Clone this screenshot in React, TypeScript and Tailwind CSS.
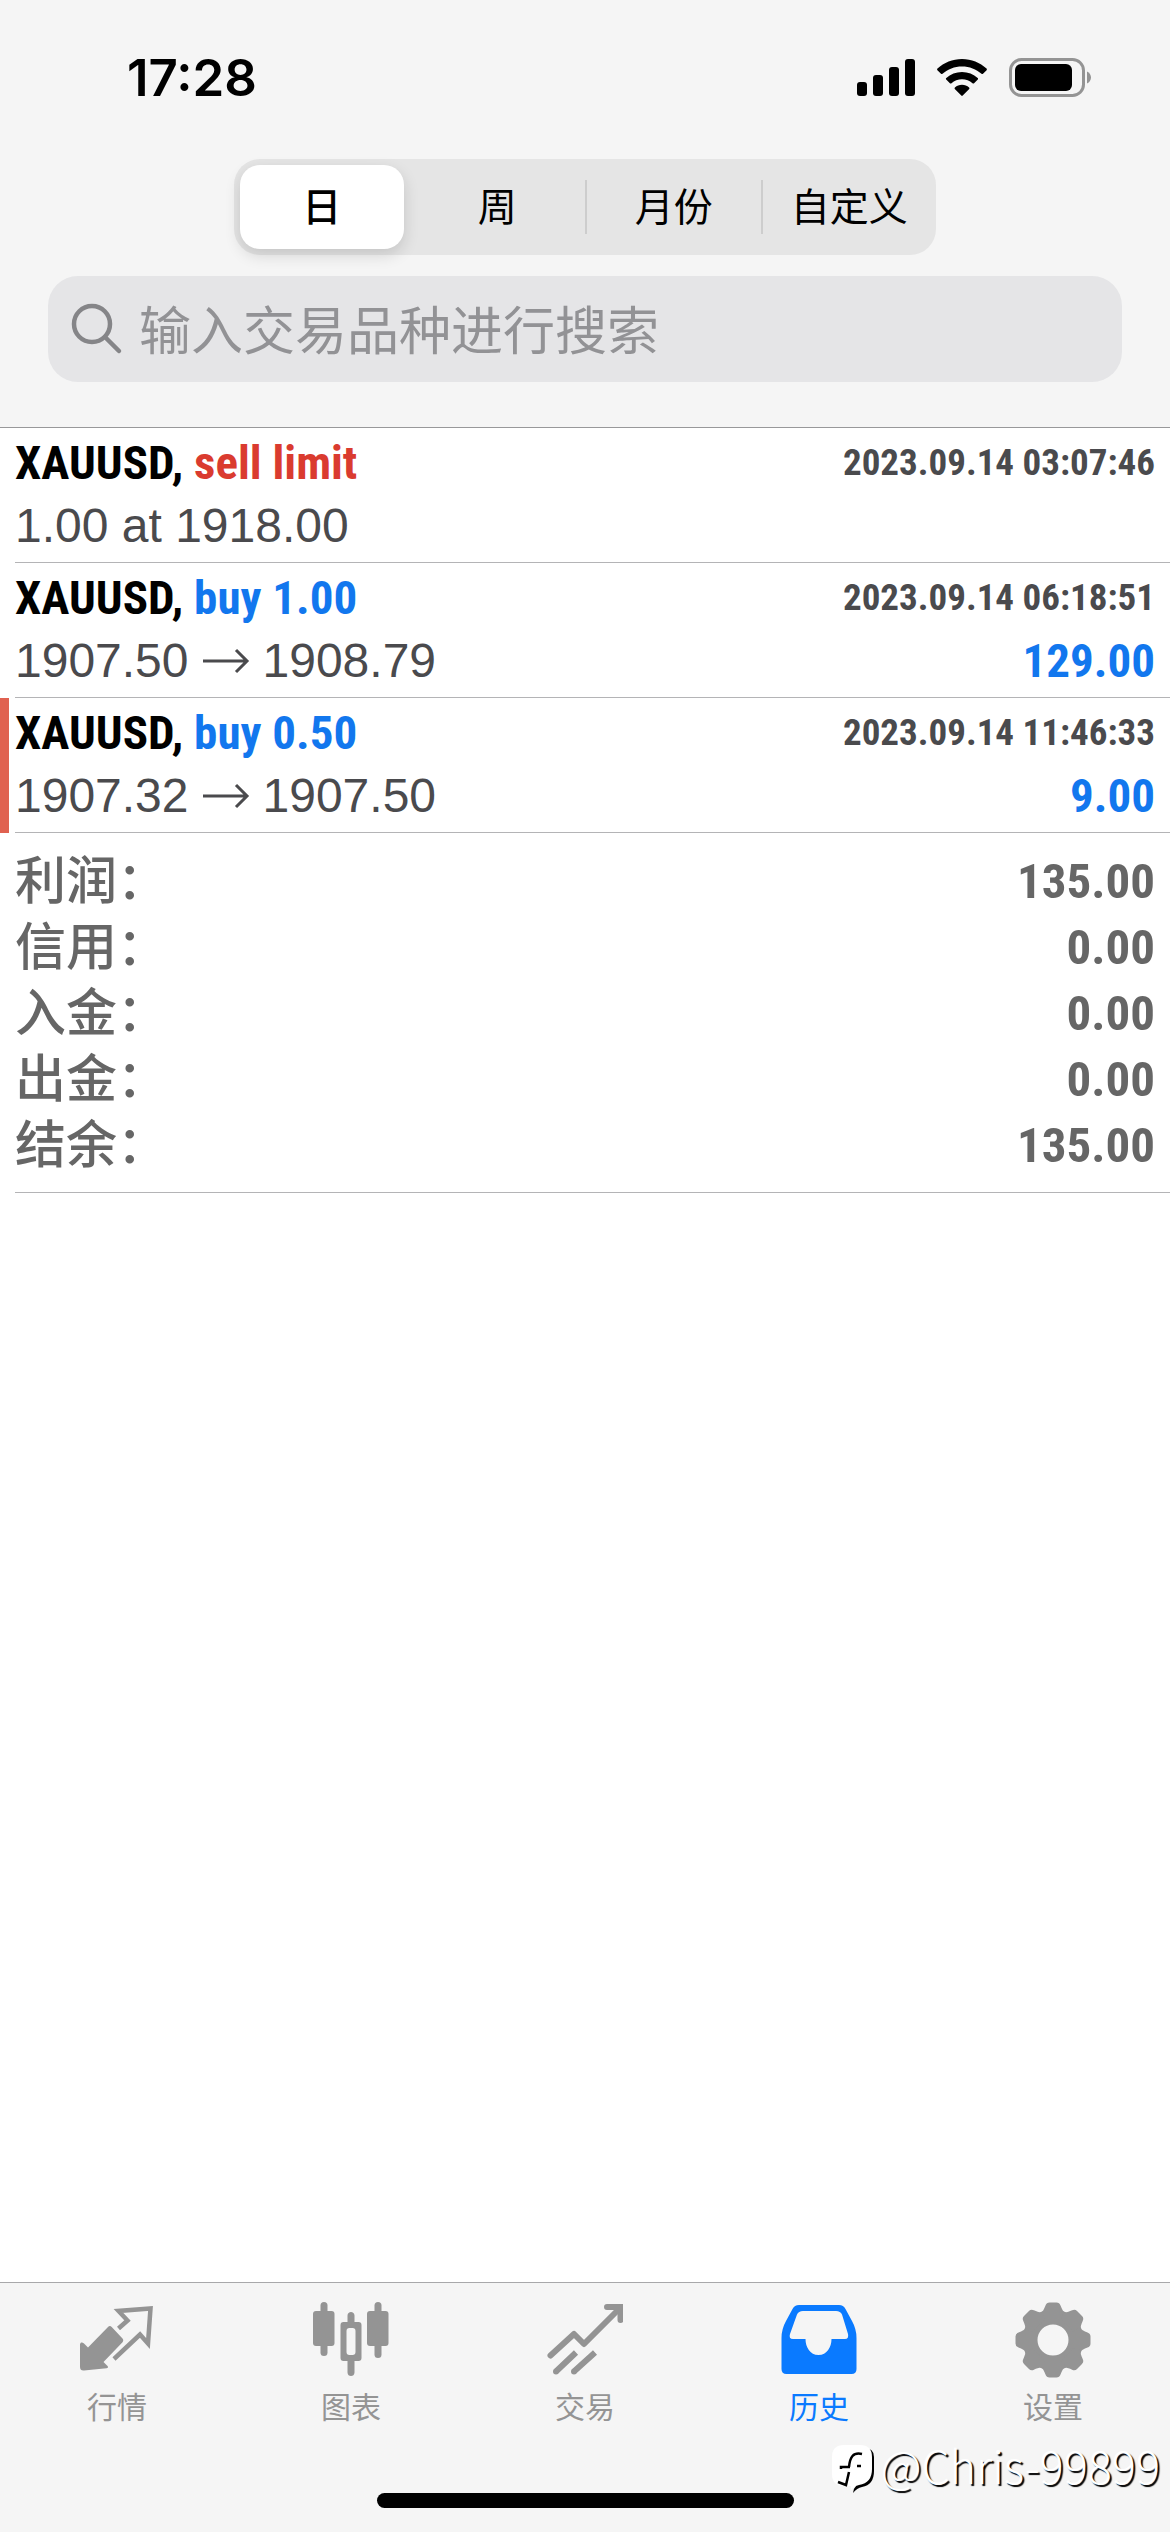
import React, { useState } from 'react';

type Trade = {
  symbol: string;
  action: string;
  side: 'buy' | 'sell';
  time: string;
  detail: string;
  closePrice?: string;
  profit?: string;
  flagged?: boolean;
};

const periods = ['日', '周', '月份', '自定义'];

const trades: Trade[] = [
  { symbol: 'XAUUSD', action: 'sell limit', side: 'sell', time: '2023.09.14 03:07:46', detail: '1.00 at 1918.00' },
  { symbol: 'XAUUSD', action: 'buy 1.00', side: 'buy', time: '2023.09.14 06:18:51', detail: '1907.50', closePrice: '1908.79', profit: '129.00' },
  { symbol: 'XAUUSD', action: 'buy 0.50', side: 'buy', time: '2023.09.14 11:46:33', detail: '1907.32', closePrice: '1907.50', profit: '9.00', flagged: true },
];

const summary = [
  { label: '利润', value: '135.00' },
  { label: '信用', value: '0.00' },
  { label: '入金', value: '0.00' },
  { label: '出金', value: '0.00' },
  { label: '结余', value: '135.00' },
];

const StatusBar = () => (
  <div className="flex items-center justify-between pt-[46px] pl-[127px] pr-[78px]">
    <span className="font-[Inter,sans-serif] text-[51px] leading-[64px] font-semibold text-black">17:28</span>
    <div className="flex items-center gap-[22px]">
      <svg width="58" height="38" viewBox="0 0 58 38" aria-hidden="true">
        <rect x="0" y="23" width="10" height="14" rx="3" />
        <rect x="16" y="16" width="10" height="21" rx="3" />
        <rect x="32" y="8" width="10" height="29" rx="3" />
        <rect x="48" y="0" width="10" height="37" rx="3" />
      </svg>
      <svg width="50" height="38" viewBox="0 0 50 38" aria-hidden="true">
        <path d="M25 0C34.500 0 43 3.600 49.500 9.600C50 10 50 10.700 49.600 11.200L46 14.800C45.600 15.200 45 15.200 44.500 14.800C39.200 10 32.500 7.400 25 7.400C17.500 7.400 10.800 10 5.500 14.800C5 15.200 4.400 15.200 4 14.800L.4 11.200C0 10.700 0 10 .5 9.600C7 3.600 15.500 0 25 0Z" />
        <path d="M25 13C31 13 36.500 15.200 40.700 19C41.200 19.400 41.200 20.100 40.800 20.600L37.100 24.300C36.700 24.700 36 24.700 35.500 24.300C32.700 21.800 29 20.300 25 20.300C21 20.300 17.300 21.800 14.500 24.300C14 24.700 13.300 24.700 12.900 24.300L9.200 20.600C8.800 20.100 8.800 19.400 9.300 19C13.500 15.200 19 13 25 13Z" />
        <path d="M25 25.800C27.700 25.800 30.200 26.800 32.100 28.500C32.600 29 32.600 29.600 32.200 30.100L25.700 36.600C25.300 37 24.700 37 24.300 36.600L17.800 30.100C17.400 29.600 17.400 29 17.900 28.500C19.800 26.800 22.300 25.800 25 25.800Z" />
      </svg>
      <svg width="83" height="40" viewBox="0 0 83 40" aria-hidden="true">
        <rect x="1.500" y="1.500" width="73" height="36" rx="11" fill="none" stroke="#949494" strokeWidth="3" />
        <rect x="6" y="6" width="57" height="27" rx="6" />
        <path d="M78 13.500C80.500 14.700 82 17 82 19.500C82 22 80.500 24.300 78 25.500Z" fill="#949494" />
      </svg>
    </div>
  </div>
);

const TradeRow: React.FC<{ trade: Trade }> = ({ trade }) => (
  <li className="flex gap-[6px]">
    <div className={`w-[9px] shrink-0 ${trade.flagged ? 'bg-[#e06150]' : ''}`} />
    <div className="grow border-b border-[#b4b4b6] pt-[3px] pr-[15px] pb-[5px]">
      <div className="flex items-center justify-between leading-[63px] font-bold font-['Roboto_Condensed',sans-serif]">
        <h2 className="text-[47px] text-black">
          {trade.symbol}, <span className={trade.side === 'sell' ? 'text-[#da3b2f]' : 'text-[#1277ee]'}>{trade.action}</span>
        </h2>
        <time className="text-[37px] text-[#4a4a4d]">{trade.time}</time>
      </div>
      <div className="flex items-center justify-between text-[48px] leading-[63px]">
        <p className="flex items-center text-[#4a4a4d]">
          {trade.detail}
          {trade.closePrice && (
            <>
              <svg className="mx-[13px]" width="48" height="26" viewBox="0 0 48 26" fill="none" stroke="currentColor" strokeWidth="3" aria-label="→">
                <path d="M1 13H45M34 2L45 13L34 24" />
              </svg>
              {trade.closePrice}
            </>
          )}
        </p>
        {trade.profit && (
          <span className="text-[47px] font-bold text-[#1277ee] font-['Roboto_Condensed',sans-serif]">{trade.profit}</span>
        )}
      </div>
    </div>
  </li>
);

const QuotesIcon = () => (
  <svg width="76" height="76" viewBox="0 0 76 76" aria-hidden="true">
    <path d="M2 40.500C3 40.200 4 40.500 5 41.500L9 45.500L29 25C30.200 23.800 31.500 23.800 32.700 25L43.500 36.500C44.500 37.700 44.500 39 43.500 40.200L24.500 60L28.500 64C29.500 65 29 66 27.500 66.200L5 68.500C2.500 68.700 1 67.500 1 65V42Z" fill="currentColor" />
    <path d="M39.500 26.500L48.500 18.500L39.500 9L71.500 6.500L69 41.500L61 32.500L35 57" fill="none" stroke="currentColor" strokeWidth="4.500" />
  </svg>
);

const ChartIcon = () => (
  <svg width="76" height="76" viewBox="0 0 76 76" aria-hidden="true" fill="currentColor">
    <rect x="7.500" y="0" width="7" height="54" rx="3.500" />
    <rect x="0" y="9" width="21.500" height="35" rx="3" />
    <rect x="61.500" y="0" width="7" height="56" rx="3.500" />
    <rect x="54" y="9" width="21.500" height="35" rx="3" />
    <path fillRule="evenodd" d="M34.500 13.500C34.500 8.800 41.500 8.800 41.500 13.500V20H45.500Q48.500 20 48.500 23V56Q48.500 59 45.500 59H41.500V70.500C41.500 75.200 34.500 75.200 34.500 70.500V59H30.500Q27.500 59 27.500 56V23Q27.500 20 30.500 20H34.500ZM36.500 26Q33.500 26 33.500 29V50Q33.500 53 36.500 53H39.500Q42.500 53 42.500 50V29Q42.500 26 39.500 26Z" />
  </svg>
);

const TradeIcon = () => (
  <svg width="76" height="76" viewBox="0 0 76 76" aria-hidden="true" fill="none" stroke="currentColor" strokeWidth="6">
    <path d="M3.500 53.500L27 32L37 42L72 7" strokeLinecap="round" strokeLinejoin="round" />
    <path d="M60 5H73.500V18" strokeLinecap="round" />
    <path d="M29 50.500L9.500 69M48 50.500L27.500 69" />
    <circle cx="9" cy="69.500" r="3" fill="currentColor" stroke="none" />
    <circle cx="27" cy="69.500" r="3" fill="currentColor" stroke="none" />
  </svg>
);

const HistoryIcon = () => (
  <svg width="76" height="76" viewBox="0 0 76 76" aria-hidden="true">
    <path
      fill="currentColor"
      fillRule="evenodd"
      d="M18 3H58Q62.500 3 64.500 7L71 19Q75.500 27 75.500 36V67Q75.500 72 70.500 72H5.500Q.5 72 .5 67V36Q.5 27 5 19L11.500 7Q13.500 3 18 3ZM22 9Q17.500 9 16 12.500L9 32Q7.500 37 12 37H24.500C24.500 45 29 53 37.500 53C46 53 50.500 45 50.500 37H64Q68 37 67 32L61 12.500Q59.500 9 55 9Z"
    />
  </svg>
);

const SettingsIcon = () => (
  <svg width="76" height="76" viewBox="0 0 76 76" aria-hidden="true">
    <g fill="currentColor">
      <path
        fillRule="evenodd"
        d="M38 7.500A30.500 30.500 0 1 1 38 68.500A30.500 30.500 0 1 1 38 7.500ZM38 22.500A15.500 15.500 0 1 0 38 53.500A15.500 15.500 0 1 0 38 22.500Z"
      />
      {[0, 45, 90, 135, 180, 225, 270, 315].map(angle => (
        <path key={angle} transform={`rotate(${angle} 38 38)`} d="M25 11.500C28 10 29 7 30.500 3.500Q31.500 .5 34.500 .5H41.500Q44.500 .5 45.500 3.500C47 7 48 10 51 11.500L46 18H30Z" />
      ))}
    </g>
  </svg>
);

const tabs = [
  { label: '行情', Icon: QuotesIcon },
  { label: '图表', Icon: ChartIcon },
  { label: '交易', Icon: TradeIcon },
  { label: '历史', Icon: HistoryIcon },
  { label: '设置', Icon: SettingsIcon },
];

export default function App() {
  const [period, setPeriod] = useState(0);
  const [tab, setTab] = useState(3);
  const [query, setQuery] = useState('');

  return (
    <div className="relative flex min-h-screen flex-col bg-white font-['Liberation_Sans','Noto_Sans_CJK_SC',sans-serif]">
      <header className="border-b border-[#98989a] bg-[#f5f5f5] pb-[45px]">
        <StatusBar />

        <div className="mx-auto mt-[49px] grid w-3/5 grid-cols-4 rounded-[26px] bg-[#e5e5e5]" role="group">
          {periods.map((name, i) => (
            <div key={name} className="flex items-center py-[6px]">
              {i > 1 && <span className="h-[54px] w-[2px] bg-[#cdcdcd]" />}
              <button
                onClick={() => setPeriod(i)}
                aria-pressed={period === i}
                className={`mx-[6px] h-[84px] grow rounded-[20px] pt-[2px] text-[39px] text-black ${period === i ? 'bg-white font-medium shadow-[0_6px_16px_rgba(0,0,0,0.14)]' : ''}`}
              >
                {name}
              </button>
            </div>
          ))}
        </div>

        <label className="mx-[48px] mt-[21px] flex h-[106px] items-center gap-[16px] rounded-[30px] bg-[#e5e5e7] px-[23px]">
          <svg className="shrink-0" width="52" height="52" viewBox="0 0 52 52" fill="none" stroke="#858588" strokeWidth="4.500" strokeLinecap="round" aria-hidden="true">
            <circle cx="21" cy="21" r="18" />
            <path d="M34 34L48 48" />
          </svg>
          <input
            type="search"
            value={query}
            onChange={e => setQuery(e.target.value)}
            placeholder="输入交易品种进行搜索"
            className="w-full grow bg-transparent pt-[6px] text-[52px] text-black outline-none placeholder:text-[#929295]"
          />
        </label>
      </header>

      <main className="grow">
        <ul>
          {trades.map(trade => (
            <TradeRow key={trade.time} trade={trade} />
          ))}
        </ul>

        <dl className="ml-[15px] border-b border-[#b4b4b6] pt-[16px] pr-[15px] pb-[13px] text-[#666]">
          {summary.map(item => (
            <div key={item.label} className="flex items-center justify-between leading-[66px]">
              <dt className="text-[51px] font-medium">{item.label}：</dt>
              <dd className="text-[49px] font-bold font-['Roboto_Condensed',sans-serif]">{item.value}</dd>
            </div>
          ))}
        </dl>
      </main>

      <footer className="border-t border-[#a8a8aa] bg-[#f5f5f5] pt-[19px] pb-[24px]">
        <nav className="flex">
          {tabs.map(({ label, Icon }, i) => (
            <button
              key={label}
              onClick={() => setTab(i)}
              className={`flex flex-1 flex-col items-center gap-[8px] text-[30px] leading-[44px] ${tab === i ? 'text-[#0a7aff]' : 'text-[#949494]'}`}
            >
              <Icon />
              {label}
            </button>
          ))}
        </nav>
        <div className="mx-auto mt-[63px] h-[15px] w-[417px] rounded-full bg-black" />
      </footer>

      <div className="absolute right-[10px] bottom-[34px] flex items-center gap-[6px]">
        <svg width="42" height="48" viewBox="0 0 42 48" aria-hidden="true">
          <path d="M12 3H32Q42 3 42 12V26Q42 40 30 42Q25 43 21 48Q21 44 24 41L6 37Z" fill="#000" />
          <path d="M12 0H28Q40 0 40 12V24Q40 38 27 40Q22 41 19 45V41H12Q0 41 0 29V12Q0 0 12 0Z" fill="#fff" />
          <path d="M30 9C21 7 18 12 17 22M9 24V22H18M17 27L14 40L6 37" fill="none" stroke="#000" strokeWidth="2.500" />
          <path d="M25 21H29" stroke="#000" strokeWidth="2.500" />
        </svg>
        <span className="pb-[8px] font-['Noto_Sans_CJK_SC',sans-serif] text-[45px] leading-[50px] font-light text-white [text-shadow:2px_2px_1px_#000]">@Chris-99899</span>
      </div>
    </div>
  );
}
